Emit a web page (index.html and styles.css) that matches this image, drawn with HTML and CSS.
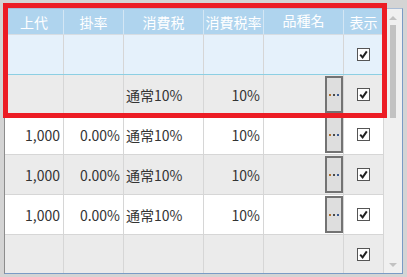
FILE: index.html
```html
<!DOCTYPE html>
<html lang="ja">
<head>
    <meta charset="UTF-8">
    <title>Grid</title>
    <link rel="stylesheet" href="styles.css">
</head>
<body>
    <div class="grid">
      <div class="table">
        <div class="row head">
          <div class="cell c1">上代</div><div class="cell c2">掛率</div><div class="cell c3">消費税</div><div class="cell c4">消費税率</div><div class="cell c5">品種名</div><div class="cell c6">表示</div>
        </div>
        <div class="row new-row">
          <div class="cell c1"></div><div class="cell c2"></div><div class="cell c3"></div><div class="cell c4"></div><div class="cell c5"></div>
          <div class="cell c6"><svg class="check" width="13" height="13" viewBox="0 0 13 13"><rect x="0.5" y="0.5" width="12" height="12" fill="#fff" stroke="#555"/><path d="M3.2 6.6 L5.6 9.4 L9.8 3.4" fill="none" stroke="#222" stroke-width="2"/></svg></div>
        </div>
        <div class="row alt">
          <div class="cell c1"></div><div class="cell c2"></div><div class="cell c3 left">通常10%</div><div class="cell c4">10%</div>
          <div class="cell c5"><span class="dots-btn"><i></i><i></i><i></i></span></div>
          <div class="cell c6"><svg class="check" width="13" height="13" viewBox="0 0 13 13"><rect x="0.5" y="0.5" width="12" height="12" fill="#fff" stroke="#555"/><path d="M3.2 6.6 L5.6 9.4 L9.8 3.4" fill="none" stroke="#222" stroke-width="2"/></svg></div>
        </div>
        <div class="row">
          <div class="cell c1">1,000</div><div class="cell c2">0.00%</div><div class="cell c3 left">通常10%</div><div class="cell c4">10%</div>
          <div class="cell c5"><span class="dots-btn"><i></i><i></i><i></i></span></div>
          <div class="cell c6"><svg class="check" width="13" height="13" viewBox="0 0 13 13"><rect x="0.5" y="0.5" width="12" height="12" fill="#fff" stroke="#555"/><path d="M3.2 6.6 L5.6 9.4 L9.8 3.4" fill="none" stroke="#222" stroke-width="2"/></svg></div>
        </div>
        <div class="row alt">
          <div class="cell c1">1,000</div><div class="cell c2">0.00%</div><div class="cell c3 left">通常10%</div><div class="cell c4">10%</div>
          <div class="cell c5"><span class="dots-btn"><i></i><i></i><i></i></span></div>
          <div class="cell c6"><svg class="check" width="13" height="13" viewBox="0 0 13 13"><rect x="0.5" y="0.5" width="12" height="12" fill="#fff" stroke="#555"/><path d="M3.2 6.6 L5.6 9.4 L9.8 3.4" fill="none" stroke="#222" stroke-width="2"/></svg></div>
        </div>
        <div class="row">
          <div class="cell c1">1,000</div><div class="cell c2">0.00%</div><div class="cell c3 left">通常10%</div><div class="cell c4">10%</div>
          <div class="cell c5"><span class="dots-btn"><i></i><i></i><i></i></span></div>
          <div class="cell c6"><svg class="check" width="13" height="13" viewBox="0 0 13 13"><rect x="0.5" y="0.5" width="12" height="12" fill="#fff" stroke="#555"/><path d="M3.2 6.6 L5.6 9.4 L9.8 3.4" fill="none" stroke="#222" stroke-width="2"/></svg></div>
        </div>
        <div class="row alt">
          <div class="cell c1"></div><div class="cell c2"></div><div class="cell c3"></div><div class="cell c4"></div><div class="cell c5"></div>
          <div class="cell c6"><svg class="check" width="13" height="13" viewBox="0 0 13 13"><rect x="0.5" y="0.5" width="12" height="12" fill="#fff" stroke="#555"/><path d="M3.2 6.6 L5.6 9.4 L9.8 3.4" fill="none" stroke="#222" stroke-width="2"/></svg></div>
        </div>
      </div>
      <div class="scrollbar">
        <span class="arrow up"></span>
        <div class="track"><div class="thumb"></div></div>
        <span class="arrow down"></span>
      </div>
    </div>
    <div class="highlight"></div>
</body>
</html>
```

FILE: styles.css
```css
body { margin: 0; background: #d4d4d4; font-family: "Noto Sans CJK JP", "Noto Sans", sans-serif; font-size: 14px; color: #333; }
.grid { display: flex; margin: 8px 0 0 4px; width: 399px; height: 266px; box-sizing: border-box; border: 1px solid #7a9bc6; border-left-color: #8c8c8c; border-top-color: #a9bcd6; background: #fff; overflow: hidden; }
.table { width: 379px; flex: none; }
.row { display: flex; height: 40px; box-sizing: border-box; border-bottom: 1px solid #d6d6d6; background: #fff; }
.row.alt { background: #ebebeb; }
.row.new-row { background: #e5f1fb; border-bottom-color: #8ccfe3; }
.row.head { height: 26px; background: #afd4ee; color: #fff; border-bottom-color: #d6dde3; padding-top: 1px; }
.cell { box-sizing: border-box; border-right: 1px solid #d6d6d6; display: flex; align-items: center; justify-content: flex-end; padding: 0 3px; white-space: nowrap; }
.head .cell { justify-content: center; border-right-color: #d3e6f4; padding: 0; }
.cell.left { justify-content: flex-start; padding: 0 2px; }
.c1 { width: 59px; }
.c2 { width: 60px; }
.c3 { width: 80px; }
.c4 { width: 60px; }
.c5 { width: 80px; padding: 1px 0 1px 0; align-items: stretch; }
.c6 { width: 40px; justify-content: center; padding: 0; }
.check { display: block; }
.dots-btn { width: 18px; box-sizing: border-box; border: 2px solid #737373; background: #dedede; display: flex; align-items: center; justify-content: center; gap: 2px; }
.dots-btn i { width: 2px; height: 2px; background: #4a4a4a; }
.dots-btn i:first-child { background: #b07030; }
.dots-btn i:last-child { background: #3a5a90; }
.scrollbar { width: 18px; flex: none; background: #f0f0f0; display: flex; flex-direction: column; align-items: center; }
.arrow { width: 0; height: 0; border-left: 4px solid transparent; border-right: 4px solid transparent; }
.arrow.up { border-bottom: 4px solid #c2c2c2; margin-top: 7px; }
.arrow.down { border-top: 4px solid #c2c2c2; margin-bottom: 6px; }
.track { flex: 1; width: 100%; display: flex; justify-content: center; }
.thumb { width: 6px; height: 93px; margin-top: 5px; background: #c2c2c2; }
.highlight { position: absolute; left: 3px; top: 3px; width: 384px; height: 115px; box-sizing: border-box; border: 5px solid #ec1c24; }
```
